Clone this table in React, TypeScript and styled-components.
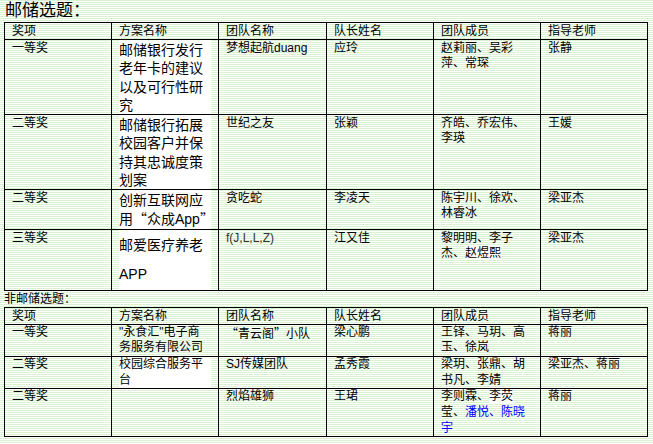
import React from 'react';
import styled, { createGlobalStyle } from 'styled-components';

const GlobalStyle = createGlobalStyle`
  *, *::before, *::after { box-sizing: border-box; }
  html, body { margin: 0; padding: 0; }
  body {
    min-height: 444px;
    background: repeating-linear-gradient(
      to bottom,
      #daf1d2 0px,
      #daf1d2 1px,
      #ffffff 1px,
      #ffffff 2px
    );
    font-family: "Liberation Sans", "Noto Sans CJK SC", sans-serif;
    color: #000;
  }
`;

const Page = styled.div`
  width: 653px;
  height: 444px;
  padding-left: 4px;
`;

const Title = styled.h1`
  margin: 0 0 0 1px;
  height: 22px;
  font-size: 17px;
  font-weight: normal;
  line-height: 22px;
  white-space: nowrap;
`;

const SubTitle = styled.h2`
  margin: 0;
  height: 16px;
  font-size: 12px;
  font-weight: normal;
  line-height: 16px;
  white-space: nowrap;
`;

const Table = styled.table`
  width: 644px;
  table-layout: fixed;
  border-collapse: separate;
  border-spacing: 0;
  border-top: 1px solid #000;
  border-left: 1px solid #000;
`;

const HeadCell = styled.th<{ $w: number }>`
  width: ${(p) => p.$w}px;
  height: 17px;
  padding: 0 7px;
  border-right: 1px solid #000;
  border-bottom: 1px solid #000;
  font-size: 12px;
  font-weight: normal;
  line-height: 16px;
  text-align: left;
  vertical-align: middle;
  white-space: nowrap;
`;

const Cell = styled.td<{ $lh: number; $pt: number }>`
  padding: ${(p) => p.$pt}px 7px 0 7px;
  border-right: 1px solid #000;
  border-bottom: 1px solid #000;
  font-size: 12px;
  line-height: ${(p) => p.$lh}px;
  text-align: left;
  vertical-align: top;
  white-space: nowrap;
`;

const PlanCell = styled.td`
  padding: 0 7px;
  border-right: 1px solid #000;
  border-bottom: 1px solid #000;
  vertical-align: top;
  white-space: nowrap;
`;

const PlanBlock = styled.div<{ $size: number; $lh: number; $pt: number; $pb: number }>`
  background: #ffffff;
  padding: ${(p) => p.$pt}px 0 ${(p) => p.$pb}px 0;
  font-size: ${(p) => p.$size}px;
  line-height: ${(p) => p.$lh}px;
`;

const Line = styled.span`
  display: block;
`;

const Marked = styled.span`
  background: #ffffff;
`;

const Blue = styled.span`
  color: #0000ff;
`;

const Formula = styled.span`
  color: #333333;
`;

const WideQuote = styled.span`
  font-family: "Noto Sans CJK SC", sans-serif;
`;

const COLS = [107, 107, 108, 107, 107, 107];
const HEADERS = ['奖项', '方案名称', '团队名称', '队长姓名', '团队成员', '指导老师'];

type Lines = React.ReactNode[];

type Row = {
  award: string;
  plan: Lines;
  planStyle: 'block' | 'plain' | 'tall';
  team: React.ReactNode;
  leader: string;
  members: Lines;
  teacher: string;
};

const renderLines = (lines: Lines) =>
  lines.map((l, i) => <Line key={i}>{l}</Line>);

const postalRows: Row[] = [
  {
    award: '一等奖',
    plan: ['邮储银行发行', '老年卡的建议', '以及可行性研', '究'],
    planStyle: 'block',
    team: '梦想起航duang',
    leader: '应玲',
    members: ['赵莉丽、吴彩', '萍、常琛'],
    teacher: '张静',
  },
  {
    award: '二等奖',
    plan: ['邮储银行拓展', '校园客户并保', '持其忠诚度策', '划案'],
    planStyle: 'block',
    team: '世纪之友',
    leader: '张颖',
    members: ['齐皓、乔宏伟、', '李瑛'],
    teacher: '王媛',
  },
  {
    award: '二等奖',
    plan: [
      '创新互联网应',
      <>
        用<WideQuote>“</WideQuote>众成App<WideQuote>”</WideQuote>
      </>,
    ],
    planStyle: 'block',
    team: '贪吃蛇',
    leader: '李凌天',
    members: ['陈宇川、徐欢、', '林睿冰'],
    teacher: '梁亚杰',
  },
  {
    award: '三等奖',
    plan: ['邮爱医疗养老', 'APP'],
    planStyle: 'tall',
    team: <Formula>f(J,L,L,Z)</Formula>,
    leader: '江又佳',
    members: [
      '黎明明、李子',
      <>
        杰、<Marked>赵煜熙</Marked>
      </>,
    ],
    teacher: '梁亚杰',
  },
];

const otherRows: Row[] = [
  {
    award: '一等奖',
    plan: ['"永食汇"电子商', '务服务有限公司'],
    planStyle: 'plain',
    team: (
      <>
        <WideQuote>“</WideQuote>青云阁<WideQuote>”</WideQuote>小队
      </>
    ),
    leader: '梁心鹏',
    members: ['王铎、马玥、高', '玉、徐岚'],
    teacher: '蒋丽',
  },
  {
    award: '二等奖',
    plan: ['校园综合服务平', '台'],
    planStyle: 'block',
    team: 'SJ传媒团队',
    leader: '孟秀霞',
    members: ['梁玥、张鼎、胡', '书凡、李婧'],
    teacher: '梁亚杰、蒋丽',
  },
  {
    award: '二等奖',
    plan: [],
    planStyle: 'plain',
    team: '烈焰雄狮',
    leader: '王珺',
    members: [
      <>
        李则霖、<Marked>李荧</Marked>
      </>,
      <>
        莹、<Blue>潘悦、陈晓</Blue>
      </>,
      <Blue>宇</Blue>,
    ],
    teacher: '蒋丽',
  },
];

type TableProps = {
  rows: Row[];
  lh: number;
  pt: number;
  planSize: number;
  planLh: number;
};

const AwardTable: React.FC<TableProps> = ({ rows, lh, pt, planSize, planLh }) => (
  <Table>
    <thead>
      <tr>
        {HEADERS.map((h, i) => (
          <HeadCell key={h} $w={COLS[i]}>
            {h}
          </HeadCell>
        ))}
      </tr>
    </thead>
    <tbody>
      {rows.map((r, i) => (
        <tr key={i}>
          <Cell $lh={lh} $pt={pt}>{r.award}</Cell>
          {r.planStyle === 'plain' ? (
            <Cell $lh={lh} $pt={pt}>{renderLines(r.plan)}</Cell>
          ) : (
            <PlanCell>
              <PlanBlock
                $size={planSize}
                $lh={r.planStyle === 'tall' ? 29 : planLh}
                $pt={planSize === 12 ? 0 : 1}
                $pb={r.planStyle === 'tall' ? 1 : 0}
              >
                {renderLines(r.plan)}
              </PlanBlock>
            </PlanCell>
          )}
          <Cell $lh={lh} $pt={pt}>{r.team}</Cell>
          <Cell $lh={lh} $pt={pt}>{r.leader}</Cell>
          <Cell $lh={lh} $pt={pt}>{renderLines(r.members)}</Cell>
          <Cell $lh={lh} $pt={pt}>{r.teacher}</Cell>
        </tr>
      ))}
    </tbody>
  </Table>
);

export default function App() {
  return (
    <Page>
      <GlobalStyle />
      <Title>邮储选题：</Title>
      <AwardTable rows={postalRows} lh={15} pt={1} planSize={14} planLh={18.25} />
      <SubTitle>非邮储选题：</SubTitle>
      <AwardTable rows={otherRows} lh={15.67} pt={0} planSize={12} planLh={15.67} />
    </Page>
  );
}
